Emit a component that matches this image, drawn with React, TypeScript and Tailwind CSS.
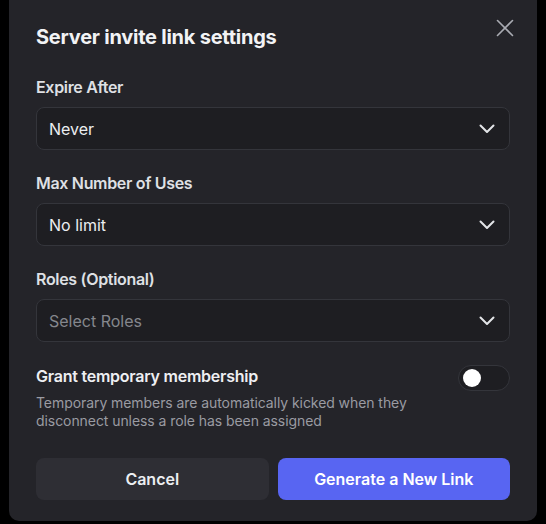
import React, { useState } from "react";

const font = { fontFamily: "Inter, 'Noto Sans', sans-serif" };

function Chevron() {
  return (
    <svg width="16" height="10" viewBox="0 0 16 10" fill="none" className="shrink-0">
      <path d="M1.5 1.5 L8 8 L14.5 1.5" stroke="#e3e5e8" strokeWidth="2" strokeLinecap="round" strokeLinejoin="round" />
    </svg>
  );
}

function SelectField({ label, value, placeholder }: { label: string; value?: string; placeholder?: string }) {
  return (
    <div className="flex flex-col">
      <div className="h-[20px] text-[16px] leading-[20px] font-semibold tracking-[-0.02em] text-[#dfe0e4]">{label}</div>
      <div className="mt-[10px] flex h-[43px] items-center justify-between rounded-[8px] border border-[#34353b] bg-[#1e1e22] pl-[12px] pr-[14px]">
        {value ? (
          <span className="text-[16px] text-[#eceef1]">{value}</span>
        ) : (
          <span className="text-[16px] text-[#85878d]">{placeholder}</span>
        )}
        <Chevron />
      </div>
    </div>
  );
}

export default function App() {
  const [temp, setTemp] = useState(false);
  return (
    <div className="h-[524px] w-[546px] overflow-hidden bg-black" style={font}>
      <div className="ml-[9px] flex h-[521px] w-[528px] flex-col rounded-b-[10px] bg-[#242429] px-[27px] pt-[25px]">
        <div className="flex items-start justify-between">
          <h1 className="text-[20px] leading-[24px] font-bold tracking-[-0.012em] text-[#f2f3f5]">Server invite link settings</h1>
          <button className="mt-[-6px] mr-[-4px] p-[0px]" aria-label="Close">
            <svg width="18" height="18" viewBox="0 0 18 18" fill="none">
              <path d="M1.5 1.5 L16.5 16.5 M16.5 1.5 L1.5 16.5" stroke="#a9abb2" strokeWidth="1.6" strokeLinecap="round" />
            </svg>
          </button>
        </div>

        <div className="mt-[28px] flex flex-col gap-[23px]">
          <SelectField label="Expire After" value="Never" />
          <SelectField label="Max Number of Uses" value="No limit" />
          <SelectField label="Roles (Optional)" placeholder="Select Roles" />
        </div>

        <div className="mt-[24px] flex items-start justify-between">
          <div className="flex flex-col">
            <div className="text-[16px] leading-[20px] font-semibold tracking-[-0.015em] text-[#eeeff2]">Grant temporary membership</div>
            <p className="mt-[8px] w-[380px] text-[14px] leading-[18px] tracking-[-0.005em] text-[#9a9ba2]">
              Temporary members are automatically kicked when they disconnect unless a role has been assigned
            </p>
          </div>
          <button
            onClick={() => setTemp(!temp)}
            className="mt-[-1px] flex h-[26px] w-[52px] shrink-0 items-center rounded-full border border-[#34353b] bg-[#1e1e22] px-[4px]"
            aria-label="Grant temporary membership"
          >
            <span className="h-[18px] w-[18px] rounded-full bg-white" />
          </button>
        </div>

        <div className="mt-[28px] flex gap-[9px]">
          <button className="flex h-[42px] flex-1 items-center justify-center rounded-[8px] bg-[#2e2e34] text-[16px] font-semibold text-[#eceef1]">
            Cancel
          </button>
          <button className="flex h-[42px] flex-1 items-center justify-center rounded-[8px] bg-[#5865f2] text-[16px] font-semibold text-white">
            Generate a New Link
          </button>
        </div>
      </div>
    </div>
  );
}
